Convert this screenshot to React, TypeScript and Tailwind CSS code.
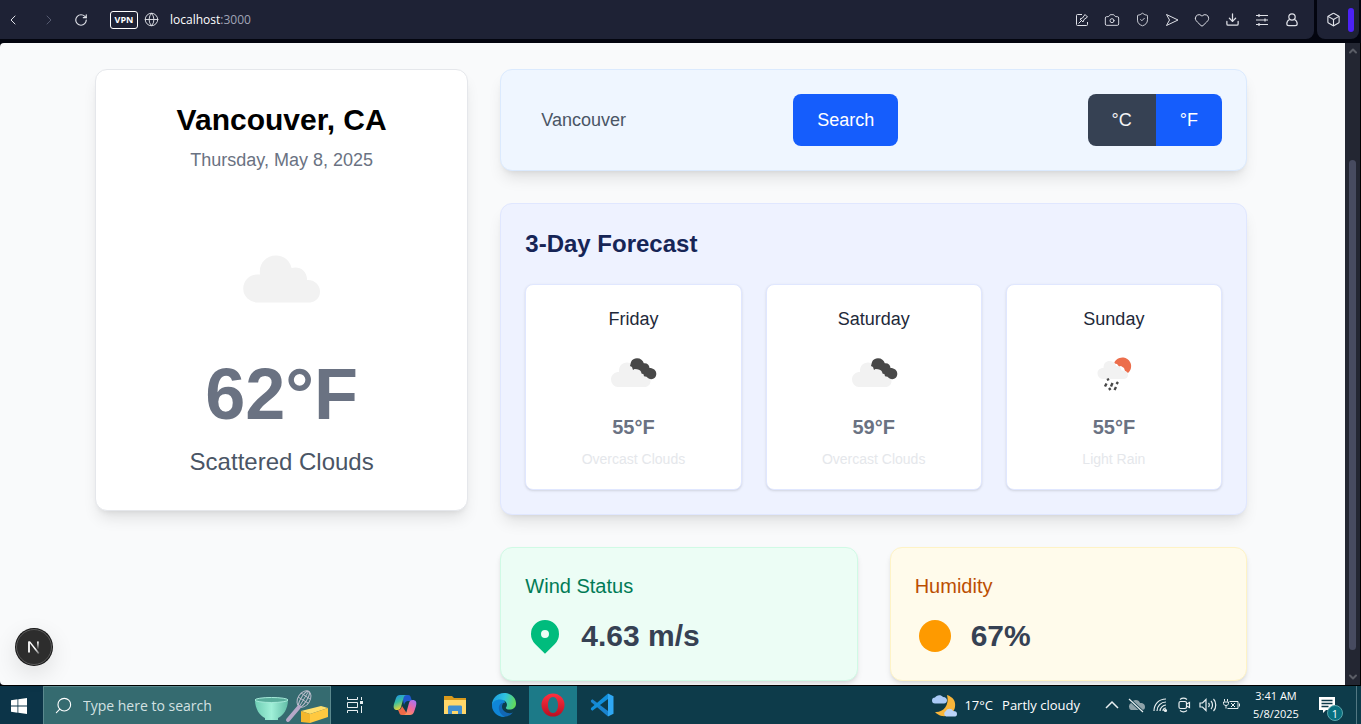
import type { ReactNode } from "react";
import {
  Box,
  Camera,
  ChevronDown,
  ChevronLeft,
  ChevronRight,
  ChevronUp,
  Download,
  Globe,
  Heart,
  RotateCw,
  Search,
  ShieldCheck,
} from "lucide-react";

function CloudIcon({ className }: { className: string }) {
  return (
    <svg viewBox="0 0 128 128" className={className} aria-hidden="true">
      <path transform="translate(26 41)" fill="#f2f2f2" d="M13.500 47.500a13.500 13.500 0 0 1-.5-28c1-.1 2-.1 3 0C14.500 9 21.500.5 32 .5c8 0 14 5 15.500 12.500 8-2.500 16 3 15.500 12 7-.5 13 4.500 13 11.500 0 6.500-5 11-11 11z" />
    </svg>
  );
}

function OvercastIcon() {
  return (
    <svg viewBox="0 0 64 64" className="size-16" aria-hidden="true">
      <path fill="#f2f2f2" d="M17 46a7.300 7.300 0 0 1-7-7.500c0-5 4-7.500 8-7.500-.3-6 3-9.500 8-9.500 4.500 0 8 3 8.500 7 4-.8 7.500 2 7.500 5.500 4-.3 7.500 2 7.500 6s-3 6-6.500 6z" />
      <path fill="#484848" d="M30 21c1-2.500 3.500-3.700 6-3.700 3.500 0 6 2 6.800 5 3-.5 5.500 1.500 5.700 4.700 3.800 0 6.800 2.200 6.800 5.800 0 3.300-2.300 5.400-5 5.400-2-.2-3.300-1.200-4.800-2.500l-2.500-.5-.5-2-2-.7c-.2-2.500-2-4-4.500-4.200l-2.500-.3-1.500 1-1-3-2-1z" />
    </svg>
  );
}

function RainIcon() {
  return (
    <svg viewBox="0 0 64 64" className="size-16" aria-hidden="true">
      <path fill="#ec6e4c" d="M32 22.500a8.800 8.800 0 1 1 14 9.500L43 30l-1-3-3-2-2 .5-2-2.500z" />
      <path fill="#f2f2f2" d="M20.500 38a5.500 5.500 0 0 1-5-5.500c0-4 3-5.500 6-5.500C21.500 22.500 24 20 27.500 20s6.500 2.500 6.500 5c3-.5 5.500 1.500 5.500 4.500 4-.5 6.500 1.200 6.500 4.500 0 2.500-2 4-4.500 4z" />
      <g stroke="#484848" strokeWidth="2.400" fill="none">
        <path d="m25.500 37.500 1 2M24.500 42.500l-1.500 3M30.500 42l-1.500 3.500M36 41l-1.500 2M27 47l1.500 2M34 46l-1.500 3" />
      </g>
    </svg>
  );
}

function IconButton({ label, children, className = "w-[30px]" }: { label: string; children: ReactNode; className?: string }) {
  return (
    <button type="button" aria-label={label} className={`flex h-full shrink-0 items-center justify-center ${className}`}>
      {children}
    </button>
  );
}

function PinEditIcon() {
  return (
    <svg viewBox="0 0 16 16" className="size-4" fill="none" stroke="currentColor" aria-hidden="true">
      <path d="M8 2.500H3.500a1 1 0 0 0-1 1v9a1 1 0 0 0 1 1h9a1 1 0 0 0 1-1V10M4.500 11.500 7 9M6 7l3 3 1-2.500L13.500 5 11 2.500 8.500 6z" />
    </svg>
  );
}

function FlowIcon() {
  return (
    <svg viewBox="0 0 16 16" className="size-4" fill="none" stroke="currentColor" strokeLinejoin="round" aria-hidden="true">
      <path d="M2.500 2.500 14 8 2.500 13.500 5.500 8z" />
    </svg>
  );
}

function SlidersIcon() {
  return (
    <svg viewBox="0 0 16 16" className="size-4" fill="none" stroke="currentColor" strokeWidth="1.200" aria-hidden="true">
      <path d="M2 3.500h12M2 8h12M2 12.500h12M5 2v3M11 6.500v3M5 11v3" />
    </svg>
  );
}

function PersonIcon() {
  return (
    <svg viewBox="0 0 16 16" className="size-4" fill="none" stroke="currentColor" strokeWidth="1.200" aria-hidden="true">
      <circle cx="8" cy="5" r="3.200" />
      <path d="M5.600 7.500C3.500 8.500 2.800 10 2.800 11.800c0 1.200.8 1.900 2 1.900h6.400c1.200 0 2-.7 2-1.900 0-1.800-.7-3.300-2.800-4.300" />
    </svg>
  );
}

function BrowserBar() {
  return (
    <header className="flex h-[43px] shrink-0 gap-[3px] bg-[#03050f] pr-[2px] pb-1 text-[#dfe1e8]">
      <div className="flex min-w-0 flex-1 items-center rounded-br-lg bg-[#1e2235] pr-[7px]">
        <IconButton label="Back" className="w-[26px]">
          <ChevronLeft size={16} strokeWidth={1.5} />
        </IconButton>
        <button type="button" aria-label="Forward" disabled className="ml-2 flex h-full w-[30px] items-center justify-center text-[#555a70]">
          <ChevronRight size={16} strokeWidth={1.5} />
        </button>
        <IconButton label="Reload" className="w-[34px]">
          <RotateCw size={14} strokeWidth={2} />
        </IconButton>
        <button type="button" className="ml-3 flex h-[18px] w-7 items-center justify-center rounded-[3px] border border-white text-[9px] font-bold text-white">
          VPN
        </button>
        <IconButton label="Site information" className="w-[26px]">
          <Globe size={15} strokeWidth={1.5} />
        </IconButton>
        <div className="ml-[6px] min-w-0 flex-1 truncate text-[12px] text-white">
          localhost<span className="text-[#a0a4b5]">:3000</span>
        </div>
        <IconButton label="Edit page"><PinEditIcon /></IconButton>
        <IconButton label="Snapshot"><Camera size={16} strokeWidth={1.4} /></IconButton>
        <IconButton label="Protection"><ShieldCheck size={15} strokeWidth={1.4} /></IconButton>
        <IconButton label="Send"><FlowIcon /></IconButton>
        <IconButton label="Favourite"><Heart size={16} strokeWidth={1.5} /></IconButton>
        <IconButton label="Downloads"><Download size={15} strokeWidth={2} /></IconButton>
        <IconButton label="Easy setup"><SlidersIcon /></IconButton>
        <IconButton label="Profile"><PersonIcon /></IconButton>
      </div>
      <div className="flex w-[42px] shrink-0 items-center rounded-b-lg bg-[#1e2235] pl-px">
        <IconButton label="Workspaces"><Box size={15} strokeWidth={1.8} /></IconButton>
        <span className="h-6 w-[6px] rounded-full bg-[#4c22f5]" />
      </div>
    </header>
  );
}

function CurrentWeather() {
  return (
    <section className="flex flex-col items-center rounded-xl border border-gray-200 bg-white p-8 text-center shadow-lg">
      <h1 className="text-3xl font-semibold text-black">Vancouver, CA</h1>
      <p className="mt-2 text-lg text-gray-500">Thursday, May 8, 2025</p>
      <CloudIcon className="mt-10 mb-4 size-32" />
      <p className="text-7xl leading-none font-bold text-gray-500">62°F</p>
      <p className="mt-4 text-2xl text-gray-600">Scattered Clouds</p>
    </section>
  );
}

function SearchPanel() {
  return (
    <section className="flex flex-wrap items-center justify-between gap-4 rounded-xl border border-blue-100 bg-blue-50 p-6 text-lg shadow-lg">
      <form className="flex flex-wrap gap-4" onSubmit={(e) => e.preventDefault()}>
        <input
          type="text"
          aria-label="City"
          defaultValue="Vancouver"
          className="w-63 bg-transparent px-4 py-3 text-gray-600 outline-none"
        />
        <button type="submit" className="rounded-lg bg-blue-600 px-6 py-3 font-medium text-white">
          Search
        </button>
      </form>
      <div className="flex overflow-hidden rounded-lg text-white">
        <button type="button" className="bg-gray-700 px-6 py-3 text-gray-100">°C</button>
        <button type="button" aria-pressed="true" className="bg-blue-600 px-6 py-3">°F</button>
      </div>
    </section>
  );
}

const days = [
  { day: "Friday", temp: "55°F", text: "Overcast Clouds", icon: <OvercastIcon /> },
  { day: "Saturday", temp: "59°F", text: "Overcast Clouds", icon: <OvercastIcon /> },
  { day: "Sunday", temp: "55°F", text: "Light Rain", icon: <RainIcon /> },
];

function Forecast() {
  return (
    <section className="rounded-xl border border-indigo-100 bg-indigo-50 p-6 shadow-lg">
      <h2 className="text-2xl font-semibold text-blue-950">3-Day Forecast</h2>
      <div className="mt-6 grid grid-cols-1 gap-6 sm:grid-cols-3">
        {days.map((d) => (
          <article key={d.day} className="flex flex-col items-center gap-2 rounded-lg border border-indigo-100 bg-white p-5 text-center shadow-sm">
            <h3 className="text-lg text-gray-800">{d.day}</h3>
            {d.icon}
            <p className="text-xl font-bold text-gray-500">{d.temp}</p>
            <p className="text-sm text-gray-200">{d.text}</p>
          </article>
        ))}
      </div>
    </section>
  );
}

function Stats() {
  return (
    <div className="grid grid-cols-1 gap-8 sm:grid-cols-2">
      <section className="rounded-xl border border-emerald-100 bg-emerald-50 p-6 shadow-md">
        <h3 className="text-xl text-emerald-700">Wind Status</h3>
        <div className="mt-4 flex items-center gap-4">
          <svg viewBox="0 0 20 20" className="size-10 fill-emerald-500" aria-hidden="true">
            <path fillRule="evenodd" d="M5.050 4.050a7 7 0 1 1 9.900 9.900L10 18.900l-4.950-4.950a7 7 0 0 1 0-9.900zM10 11a2 2 0 1 0 0-4 2 2 0 0 0 0 4z" />
          </svg>
          <p className="text-3xl font-bold text-gray-700">4.63 m/s</p>
        </div>
      </section>
      <section className="rounded-xl border border-amber-100 bg-amber-50 p-6 shadow-md">
        <h3 className="text-xl text-amber-700">Humidity</h3>
        <div className="mt-4 flex items-center gap-4">
          <svg viewBox="0 0 20 20" className="size-10 fill-amber-500" aria-hidden="true">
            <circle cx="10" cy="10" r="8" />
          </svg>
          <p className="text-3xl font-bold text-gray-700">67%</p>
        </div>
      </section>
    </div>
  );
}

function ScrollTrack() {
  return (
    <div className="flex w-4 shrink-0 flex-col items-center border-r border-black bg-[#232632] text-[#5a5d66]" aria-hidden="true">
      <ChevronUp size={12} strokeWidth={4} className="mt-[2px]" />
      <div className="min-h-0 flex-[103]" />
      <div className="min-h-0 w-[7px] flex-[490] rounded-full bg-[#474b60]" />
      <div className="min-h-0 flex-[21]" />
      <ChevronDown size={12} strokeWidth={4} className="mb-[2px]" />
    </div>
  );
}

function NextBadge() {
  return (
    <button type="button" aria-label="Open Next.js Dev Tools" className="absolute bottom-5 left-4 flex size-9 items-center justify-center rounded-full border border-[#5b5b5b] bg-[#2d2d2d] shadow-[0_0_0_1px_#171717,0_8px_24px_rgba(0,0,0,0.12)]">
      <svg viewBox="0 0 14 14" className="size-[14px]" fill="none" aria-hidden="true">
        <defs>
          <linearGradient id="nextStem" x1="0" y1="0" x2="0" y2="1">
            <stop offset="0" stopColor="#fff" />
            <stop offset="1" stopColor="#fff" stopOpacity="0" />
          </linearGradient>
          <linearGradient id="nextDiagonal" x1="0" y1="0" x2="1" y2="1">
            <stop offset=".6" stopColor="#fff" />
            <stop offset="1" stopColor="#fff" stopOpacity=".2" />
          </linearGradient>
        </defs>
        <path d="M2 12.500V1.500" stroke="#fff" strokeWidth="1.800" />
        <path d="M1.500 1.500h1.700L12.500 13l-1.400 1z" fill="url(#nextDiagonal)" />
        <rect x="10" y="1.500" width="1.800" height="8" fill="url(#nextStem)" />
      </svg>
    </button>
  );
}

function SearchArt() {
  return (
    <svg viewBox="0 0 74 36" className="mr-[2px] h-9 w-[74px]" aria-hidden="true">
      <defs>
        <linearGradient id="bowl" x1="0" x2="1">
          <stop offset="0" stopColor="#6fcdb4" />
          <stop offset=".5" stopColor="#a0f0d8" />
          <stop offset="1" stopColor="#62bda7" />
        </linearGradient>
      </defs>
      <path fill="url(#bowl)" d="M1 12h33c0 9-5 16-10 18v2H11v-2C6 28 1 21 1 12z" />
      <ellipse cx="17.500" cy="12" rx="16.500" ry="2.500" fill="#58ad9b" stroke="#a5ead9" />
      <g fill="none" stroke="#b9bccb">
        <ellipse cx="50" cy="11" rx="6" ry="9" transform="rotate(32 50 11)" />
        <ellipse cx="50" cy="11" rx="3" ry="9" transform="rotate(32 50 11)" />
        <path d="M54.500 3.500 45 19M44 9l10 6M47 5l9 6" />
      </g>
      <path d="m45 19-11 13" stroke="#b7a8c8" strokeWidth="4" strokeLinecap="round" />
      <path fill="#ffdf6c" d="m47 23 20-5 7 2-18 6z" />
      <path fill="#f4b72c" d="m47 23 9 3v9l-9-1z" />
      <path fill="#ffc940" d="m56 26 18-6v9l-18 6z" />
    </svg>
  );
}

function TaskViewIcon() {
  return (
    <svg viewBox="0 0 18 18" className="size-[18px]" fill="none" stroke="#e8f0f2" aria-hidden="true">
      <path d="M1.500 1v2.500h10V1M1.500 17v-2.500h10V17M1.500 6.500h10v5h-10zM15.500 1v3M15.500 10v7" />
      <path d="M14 5h3v3h-3z" fill="#e8f0f2" stroke="none" />
    </svg>
  );
}

function CopilotIcon() {
  return (
    <svg viewBox="0 0 24 24" className="size-6" aria-hidden="true">
      <defs>
        <linearGradient id="copA" x1="0" y1="0" x2=".4" y2="1">
          <stop offset="0" stopColor="#1c8df0" />
          <stop offset=".5" stopColor="#38bfa0" />
          <stop offset="1" stopColor="#f3d530" />
        </linearGradient>
        <linearGradient id="copB" x1=".8" y1="0" x2=".2" y2="1">
          <stop offset="0" stopColor="#a873f2" />
          <stop offset=".5" stopColor="#f0689c" />
          <stop offset="1" stopColor="#ff9a50" />
        </linearGradient>
      </defs>
      <path fill="#1f58cf" d="M9 2h6c2 0 2.500 1 3 3l1 3h-4c-2 0-3 1-4 4z" />
      <path fill="url(#copA)" d="M7 2h7c-2 0-3 1-3.500 3L8 14c-.6 2-1.500 3-3.500 3C1 17 0 15 1 11l2-6c.7-2 2-3 4-3z" />
      <path fill="#ee6a48" d="M15 22H9c-2 0-2.500-1-3-3l-1-2c2 0 3-1 4-4z" />
      <path fill="url(#copB)" d="M17 22h-7c2 0 3-1 3.500-3L16 10c.6-2 1.500-3 3.500-3C23 7 24 9 23 13l-2 6c-.7 2-2 3-4 3z" />
    </svg>
  );
}

function FolderIcon() {
  return (
    <svg viewBox="0 0 24 24" className="size-6" aria-hidden="true">
      <path fill="#d99a1c" d="M1 3h8l2 2h12v4H1z" />
      <path fill="#ffd76a" d="M1 7h22v14H1z" />
      <path fill="#3f8ed0" d="M5 21v-7c0-1 .6-1.500 1.500-1.500h11c1 0 1.500.5 1.500 1.500v7h-4v-3H9v3z" />
    </svg>
  );
}

function EdgeIcon() {
  return (
    <svg viewBox="0 0 24 24" className="size-6" aria-hidden="true">
      <defs>
        <linearGradient id="edgeTop" x1="0" y1=".3" x2="1" y2=".5">
          <stop offset="0" stopColor="#1b9de2" />
          <stop offset=".5" stopColor="#2fc2df" />
          <stop offset="1" stopColor="#62da58" />
        </linearGradient>
      </defs>
      <path fill="#1267b5" d="M0 12a12 12 0 0 0 21 7.500c-5 2-11-1-11-6 0-2 1-3 2-4C6 5 0 7 0 12z" />
      <path fill="#0f86d8" d="M0 12c0-4 4-7 8-6.500 3 .3 5 2 5 4.500-4-1-7 2-6 6.500.6 3.500 3 6 6 7.400C6 24.500 0 19 0 12z" />
      <path fill="url(#edgeTop)" d="M0 12C0 5 5.500 0 12 0s12 4.500 12 10.500c0 4-3 6-6.500 6-3 0-4-1-3.500-2 2-2.500 1-7-4-7.800C5 5.800 1 8 0 12z" />
    </svg>
  );
}

function OperaIcon() {
  return (
    <svg viewBox="0 0 24 24" className="size-6" aria-hidden="true">
      <defs>
        <linearGradient id="opera" x1="0" y1="0" x2="0" y2="1">
          <stop offset="0" stopColor="#ff3040" />
          <stop offset="1" stopColor="#b80f22" />
        </linearGradient>
      </defs>
      <path fill="url(#opera)" fillRule="evenodd" d="M12 .5a11.500 11.500 0 1 1 0 23 11.500 11.500 0 0 1 0-23zm0 3.500c-3 0-5 3.500-5 8s2 8 5 8 5-3.500 5-8-2-8-5-8z" />
    </svg>
  );
}

function CodeIcon() {
  return (
    <svg viewBox="0 0 24 24" className="size-6" aria-hidden="true">
      <path fill="#1a84cf" d="m.8 7.600 1.600-1.400L18 18v5.500L1 9z" />
      <path fill="#118fdb" d="m.8 16.400 1.600 1.400L18 6V.5L1 15z" />
      <path fill="#2fa8f4" d="m18 .5 5.500 2.700v17.600L18 23.500z" />
    </svg>
  );
}

function MoonCloudIcon() {
  return (
    <svg viewBox="0 0 26 24" className="h-6 w-[26px] shrink-0" aria-hidden="true">
      <path fill="#f8b53a" d="M15 1c6 2 9 6 8 12s-7 10-13 9c-3-.5-5-2-7-4 7 1 15-6 12-17z" />
      <path fill="#a9c9f6" d="M3 9.500a3 3 0 0 1 0-6C4 1 9 0 11 3c3 0 4 2 4 3.500s-1 3-3 3z" />
      <path fill="#bcd3f8" d="M14 22.500a3 3 0 0 1 0-5.500c1-3 6-3 7 0 3 0 4 1 4 3s-1 2.500-3 2.500z" />
    </svg>
  );
}

function TrayIcon({ label, children }: { label: string; children: ReactNode }) {
  return (
    <button type="button" aria-label={label} className="flex h-full w-6 shrink-0 items-center justify-center">
      <svg viewBox="0 0 18 16" className="h-4 w-[18px]" fill="none" stroke="currentColor" strokeWidth="1.200" aria-hidden="true">
        {children}
      </svg>
    </button>
  );
}

function Taskbar() {
  return (
    <footer className="flex h-[39px] shrink-0 items-center overflow-hidden border-t border-black bg-[#0d3b4a] text-white">
      <IconButton label="Start" className="w-[43px] bg-[#0c3448] pt-px pr-[5px]">
        <svg viewBox="0 0 16 16" className="size-4 fill-white" aria-hidden="true">
          <path d="m0 2.200 6.500-.9v6.200H0zM7.300 1.200 16 0v7.500H7.300zM0 8.400h6.500v6.300L0 13.800zM7.300 8.400H16V16l-8.700-1.200z" />
        </svg>
      </IconButton>
      <label className="flex h-full w-72 min-w-0 items-center border border-b-0 border-[#5b898e] bg-[#356b70] pl-[10px]">
        <Search size={19} strokeWidth={1.4} className="shrink-0 -scale-x-100" />
        <input
          type="text"
          placeholder="Type here to search"
          aria-label="Type here to search"
          className="ml-[10px] min-w-0 flex-1 bg-transparent pt-px text-sm outline-none placeholder:text-[#d3e1e2]"
        />
        <SearchArt />
      </label>
      <nav aria-label="Pinned apps" className="flex h-full shrink-0 gap-px">
        <IconButton label="Task view" className="w-12"><TaskViewIcon /></IconButton>
        <IconButton label="Copilot" className="w-[50px]"><CopilotIcon /></IconButton>
        <IconButton label="File Explorer" className="w-12"><FolderIcon /></IconButton>
        <IconButton label="Edge" className="w-12"><EdgeIcon /></IconButton>
        <IconButton label="Opera" className="w-12 bg-[#1c7a88]"><OperaIcon /></IconButton>
        <IconButton label="Visual Studio Code" className="w-12"><CodeIcon /></IconButton>
      </nav>
      <div className="flex-1" />
      <button type="button" className="flex h-full shrink-0 items-center pt-px text-[13px]">
        <MoonCloudIcon />
        <span className="ml-[6px]">17°C</span>
        <span className="ml-[9px]">Partly cloudy</span>
      </button>
      <div className="ml-5 flex h-full shrink-0 items-center text-[#e8eff1]">
        <TrayIcon label="Show hidden icons"><path d="m3 11 6-6 6 6" strokeWidth="1.500" /></TrayIcon>
        <TrayIcon label="OneDrive offline">
          <path fill="#8fa3aa" stroke="none" d="M4 13a4 4 0 0 1 0-7c2-4 8-4 9 0 4 0 5 2 5 4s-1 3-3 3z" />
          <path d="m2 2 14 13" stroke="#0d3b4a" strokeWidth="3" />
          <path d="m2 2 14 13" />
        </TrayIcon>
        <TrayIcon label="Network">
          <path d="M3 14C3 7 8 2 15 2M6 14c0-5 4-9 9-9M9 14c0-3 3-6 6-6M12 14c0-2 1-3 3-3" />
          <circle cx="14.500" cy="13.500" r="1" fill="currentColor" />
        </TrayIcon>
        <TrayIcon label="Camera">
          <rect x="4" y="4.500" width="7.500" height="7" rx="1.500" />
          <path d="m11.500 7 3-1.500v5l-3-1.500M5 2.500c2-1.500 5-1.500 7 0M5 13.500c2 1.500 5 1.500 7 0" />
        </TrayIcon>
        <TrayIcon label="Volume">
          <path d="M1 6v4h2.500L7 13.500v-11L3.500 6zM9.500 6c1 1 1 3 0 4M12 4c2 2 2 6 0 8M14.500 2c3 3 3 9 0 12" />
        </TrayIcon>
        <TrayIcon label="Battery">
          <path d="M6.500 4.500H15v7H4.500M16.500 6.500v3M1.500 2v2.500M4.500 2v2.500M.5 5h5v1.500c0 1-1 2-2.500 2S.5 7.500.5 6.500zM3 8.500v3M8 6l4 4M12 6l-4 4" strokeWidth="1" />
        </TrayIcon>
      </div>
      <button type="button" className="ml-1 w-[56px] shrink-0 text-center text-[11px] leading-[18px]">
        <span className="block whitespace-nowrap">3:41 AM</span>
        <span className="block whitespace-nowrap">5/8/2025</span>
      </button>
      <button type="button" aria-label="1 new notification" className="relative ml-[13px] flex h-full w-7 shrink-0 items-center">
        <svg viewBox="0 0 20 20" className="size-5" aria-hidden="true">
          <path fill="#fff" d="M2 2h16v13H9l-3 3v-3H2z" />
          <path d="M4.500 5.500h11M4.500 8.500h11M4.500 11.500h7" stroke="#0d3b4a" strokeWidth="1.300" />
        </svg>
        <span className="absolute right-[2px] bottom-[3px] flex size-4 items-center justify-center rounded-full border border-[#5aa5ac] bg-[#087080] text-[11px] leading-none">1</span>
      </button>
      <div className="mr-1 ml-[11px] h-full w-px shrink-0 bg-[#527782]" />
    </footer>
  );
}

export default function App() {
  return (
    <div className="flex h-screen flex-col bg-[#03050f] font-['Open_Sans','Noto_Sans',sans-serif]">
      <BrowserBar />
      <div className="relative flex min-h-0 flex-1">
        <main className="min-w-0 flex-1 overflow-y-auto rounded-l bg-gray-50 py-[26px] pr-[35px] pl-8 font-['Liberation_Sans',Arial,sans-serif] [scrollbar-width:none]">
          <div className="mx-auto grid max-w-6xl grid-cols-1 items-start gap-8 lg:grid-cols-[1fr_2fr]">
            <CurrentWeather />
            <div className="flex flex-col gap-8">
              <SearchPanel />
              <Forecast />
              <Stats />
            </div>
          </div>
        </main>
        <ScrollTrack />
        <NextBadge />
      </div>
      <Taskbar />
    </div>
  );
}
